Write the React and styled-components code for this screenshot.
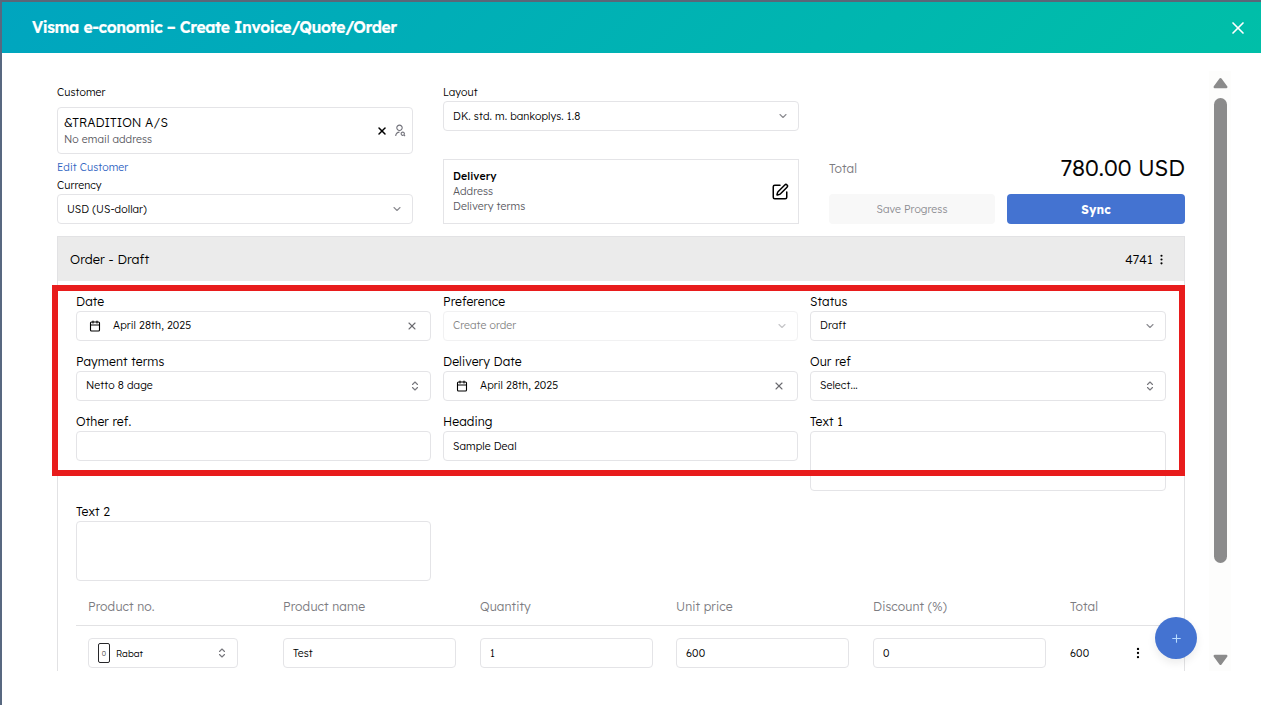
import React from 'react';
import styled, { createGlobalStyle } from 'styled-components';
import {
    Calendar,
    ChevronDown,
    ChevronsUpDown,
    EllipsisVertical,
    Plus,
    SquarePen,
    X,
} from 'lucide-react';
import { RiUserSearchLine } from 'react-icons/ri';

const GlobalStyle = createGlobalStyle`
    * {
        box-sizing: border-box;
    }
    html, body {
        margin: 0;
        overflow: hidden;
        background: #fff;
    }
    body, input, textarea, button {
        font-family: Lexend, Inter, sans-serif;
        font-weight: 300;
        letter-spacing: 0.09px;
    }
`;

const Window = styled.div`
    width: 1261px;
    height: 705px;
    border-top: 2px solid #5b6678;
    border-left: 2px solid #586880;
    display: flex;
    flex-direction: column;
    background: #fff;
    color: #000;
    font-size: 10.5px;
    overflow: hidden;
`;

const Header = styled.header`
    flex: none;
    height: 51px;
    padding: 0 13px 0 30px;
    display: flex;
    align-items: center;
    justify-content: space-between;
    background: linear-gradient(135deg, #00a5bf, #00bfa8);
    color: #fff;
`;

const Title = styled.h1`
    margin: 0 0 1px;
    font-size: 15.75px;
    font-weight: 600;
    letter-spacing: -0.4px;
    -webkit-text-stroke: 0.2px #fff;
`;

const Body = styled.div`
    height: 600px;
    margin-top: 18px;
    display: flex;
    overflow: hidden;
`;

const Content = styled.main`
    position: relative;
    width: 1128px;
    margin-left: 55px;
    flex: none;
`;

const TopGrid = styled.section`
    height: 153px;
    padding-top: 14px;
    display: grid;
    grid-template-columns: repeat(3, 356px);
    column-gap: 30px;
`;

const Column = styled.div`
    display: flex;
    flex-direction: column;
    justify-content: ${p => p.$end ? 'flex-end' : 'flex-start'};
`;

const SmallLabel = styled.label`
    height: ${p => p.$height || 16}px;
    line-height: 15px;
`;

const EditLink = styled.a`
    height: 19px;
    margin-top: 5px;
    line-height: 17px;
    color: #2f64c2;
`;

const Control = styled.div`
    width: ${p => p.$width || '100%'};
    height: ${p => p.$height || 30}px;
    padding: ${p => p.$padding || '0 9px 0 9px'};
    display: flex;
    align-items: center;
    justify-content: space-between;
    border: 1px solid #e4e4e7;
    border-radius: 4px;
    background: #fff;
    opacity: ${p => p.$disabled ? 0.5 : 1};

    svg {
        flex: none;
    }
`;

const CustomerName = styled.div`
    padding-top: 1px;
    font-size: 12.25px;
    line-height: 16px;
`;

const Muted = styled.div`
    color: #58585e;
    line-height: ${p => p.$line || 15}px;
`;

const Icons = styled.div`
    display: flex;
    align-items: center;
    gap: 5px;
`;

const DeliveryBox = styled.div`
    height: 65px;
    margin-top: 28px;
    padding: 0 9px 0 9px;
    display: flex;
    align-items: center;
    justify-content: space-between;
    border: 1px solid #e4e4e7;
    line-height: 15px;
`;

const Strong = styled.div`
    font-weight: 500;
`;

const TotalRow = styled.div`
    height: 51px;
    display: flex;
    align-items: center;
    justify-content: space-between;
    color: #7c7c81;
    font-size: 12.2px;
`;

const Amount = styled.strong`
    margin-bottom: 1px;
    color: #000;
    font-size: 22.4px;
    font-weight: 300;
    -webkit-text-stroke: 0.2px #000;
`;

const Buttons = styled.div`
    display: grid;
    grid-template-columns: 166px 178px;
    gap: 12px;
`;

const Button = styled.button`
    height: 30px;
    padding: 0;
    border: 0;
    border-radius: 4px;
    background: ${p => p.$primary ? '#4473d1' : '#f8f8f8'};
    color: ${p => p.$primary ? '#fff' : '#8b8b90'};
    font-size: ${p => p.$primary ? 12 : 10.5}px;
    font-weight: ${p => p.$primary ? 700 : 300};
`;

const Panel = styled.section`
    height: 460px;
    margin-top: 12px;
    border: 1px solid #e2e2e4;
`;

const PanelHead = styled.div`
    height: 44px;
    padding: 0 16px 0 12px;
    display: flex;
    align-items: center;
    justify-content: space-between;
    background: #ebebeb;
    font-size: 12.8px;
`;

const OrderNo = styled.div`
    display: flex;
    align-items: center;
    gap: 2px;
`;

const Fields = styled.div`
    padding: 12px 18px 0;
    display: grid;
    grid-template-columns: 355px 355px 356px;
    column-gap: 12px;
`;

const FieldBox = styled.div`
    height: ${p => p.$tall ? 90 : 60}px;
`;

const FieldLabel = styled.label`
    display: block;
    height: 18px;
    line-height: 17px;
    font-size: 12.2px;
`;

const Value = styled.div`
    padding-bottom: ${p => p.$raised ? 2 : 0}px;
`;

const DateValue = styled.div`
    display: flex;
    align-items: center;
    gap: 12px;
`;

const Table = styled.div`
    margin: -4px 18px 0;
`;

const TableRow = styled.div`
    height: ${p => p.$head ? 37 : 54}px;
    display: grid;
    grid-template-columns: 195px 197px 196px 197px 197px 87px;
    align-items: center;
    border-bottom: ${p => p.$head ? '1px solid #e2e2e4' : '0'};
    color: ${p => p.$head ? '#7c7c81' : 'inherit'};
    font-size: ${p => p.$head ? 12.2 : 10.5}px;
`;

const Cell = styled.div`
    padding-left: 12px;
    display: flex;
    align-items: center;
    justify-content: space-between;
`;

const HeadText = styled.span`
    padding-bottom: 1px;
`;

const Product = styled.div`
    display: flex;
    align-items: center;
    gap: 6px;
    font-size: 9.3px;
`;

const Thumb = styled.span`
    width: 12px;
    height: 20px;
    display: flex;
    align-items: center;
    justify-content: center;
    border: 1px solid #27272a;
    border-radius: 2px;
    color: #3f3f46;
    font-size: 7px;
`;

const AddButton = styled.button`
    position: absolute;
    left: 1098px;
    top: 546px;
    width: 42px;
    height: 42px;
    padding: 0;
    display: flex;
    align-items: center;
    justify-content: center;
    border: 0;
    border-radius: 50%;
    background: #4473d1;
    color: #b9dcff;
    box-shadow: 0 4px 8px rgba(0, 0, 0, 0.08);
`;

// Highlight frame drawn over the editable fields
const Highlight = styled.div`
    position: absolute;
    left: -5px;
    top: 214px;
    width: 1133px;
    height: 191px;
    border: 6px solid #e81c1c;
    pointer-events: none;
`;

const Scrollbar = styled.div`
    width: 22px;
    margin-left: 24px;
    padding: 6px 0 5px 1px;
    display: flex;
    flex-direction: column;
    align-items: center;
    background: #fdfdfc;
`;

const Thumbbar = styled.div`
    width: 13px;
    height: 465px;
    margin: 9px 0 auto;
    border-radius: 7px;
    background: #8b8b8b;
`;

const Arrow = ({ down }) => (
    <svg width="15" height="12" viewBox="0 0 15 12">
        <path
            d={down ? 'M1.8 2h11.4L7.5 9.8z' : 'M1.8 10h11.4L7.5 2.2z'}
            fill="#8b8b8b"
            stroke="#8b8b8b"
            strokeWidth="2.5"
            strokeLinejoin="round"
        />
    </svg>
);

const Chevron = () => <ChevronDown size={12} color="#8b8b90" strokeWidth={2.2} />;
const UpDown = () => <ChevronsUpDown size={12} color="#77777d" strokeWidth={2.2} />;

const Field = ({ label, value, type, disabled }) => (
    <FieldBox $tall={type === 'area'}>
        <FieldLabel>{label}</FieldLabel>
        <Control
            $height={type === 'area' ? 60 : 30}
            $disabled={disabled}
            $padding={type === 'date' ? '0 12px' : undefined}
        >
            {type === 'date' ? (
                <DateValue>
                    <Calendar size={12} strokeWidth={2.2} />
                    <Value $raised>{value}</Value>
                </DateValue>
            ) : (
                <Value $raised={!!type}>{value}</Value>
            )}
            {type === 'date' && <X size={12} color="#6b6b70" strokeWidth={2.2} />}
            {type === 'select' && <Chevron />}
            {type === 'combo' && <UpDown />}
        </Control>
    </FieldBox>
);

const fields = [
    { label: 'Date', value: 'April 28th, 2025', type: 'date' },
    { label: 'Preference', value: 'Create order', type: 'select', disabled: true },
    { label: 'Status', value: 'Draft', type: 'select' },
    { label: 'Payment terms', value: 'Netto 8 dage', type: 'combo' },
    { label: 'Delivery Date', value: 'April 28th, 2025', type: 'date' },
    { label: 'Our ref', value: 'Select...', type: 'combo' },
    { label: 'Other ref.' },
    { label: 'Heading', value: 'Sample Deal' },
    { label: 'Text 1', type: 'area' },
    { label: 'Text 2', type: 'area' },
];

const headings = ['Product no.', 'Product name', 'Quantity', 'Unit price', 'Discount (%)', 'Total'];

const App = () => {
    return (
        <>
            <GlobalStyle />
            <Window>
                <Header>
                    <Title>Visma e-conomic – Create Invoice/Quote/Order</Title>
                    <X size={20} strokeWidth={2} />
                </Header>
                <Body>
                    <Content>
                        <TopGrid>
                            <Column>
                                <SmallLabel $height={22}>Customer</SmallLabel>
                                <Control $height={47} $padding="0 6px">
                                    <div>
                                        <CustomerName>&amp;TRADITION A/S</CustomerName>
                                        <Muted $line={16}>No email address</Muted>
                                    </div>
                                    <Icons>
                                        <X size={12} strokeWidth={3} />
                                        <RiUserSearchLine size={13} color="#71717a" />
                                    </Icons>
                                </Control>
                                <EditLink>Edit Customer</EditLink>
                                <SmallLabel>Currency</SmallLabel>
                                <Control>
                                    USD (US-dollar)
                                    <Chevron />
                                </Control>
                            </Column>
                            <Column>
                                <SmallLabel>Layout</SmallLabel>
                                <Control>
                                    DK. std. m. bankoplys. 1.8
                                    <Chevron />
                                </Control>
                                <DeliveryBox>
                                    <div>
                                        <Strong>Delivery</Strong>
                                        <Muted>Address</Muted>
                                        <Muted>Delivery terms</Muted>
                                    </div>
                                    <SquarePen size={18} />
                                </DeliveryBox>
                            </Column>
                            <Column $end>
                                <TotalRow>
                                    Total
                                    <Amount>780.00 USD</Amount>
                                </TotalRow>
                                <Buttons>
                                    <Button>Save Progress</Button>
                                    <Button $primary>Sync</Button>
                                </Buttons>
                            </Column>
                        </TopGrid>
                        <Panel>
                            <PanelHead>
                                Order - Draft
                                <OrderNo>
                                    4741
                                    <EllipsisVertical size={13} />
                                </OrderNo>
                            </PanelHead>
                            <Fields>
                                {fields.map(item => (
                                    <Field key={item.label} {...item} />
                                ))}
                            </Fields>
                            <Table>
                                <TableRow $head>
                                    {headings.map(name => (
                                        <Cell key={name}>
                                            <HeadText>{name}</HeadText>
                                        </Cell>
                                    ))}
                                </TableRow>
                                <TableRow>
                                    <Cell>
                                        <Control $width="150px">
                                            <Product>
                                                <Thumb>0</Thumb>
                                                Rabat
                                            </Product>
                                            <UpDown />
                                        </Control>
                                    </Cell>
                                    {['Test', '1', '600', '0'].map((value, i) => (
                                        <Cell key={i}>
                                            <Control $width="173px">{value}</Control>
                                        </Cell>
                                    ))}
                                    <Cell>
                                        600
                                        <EllipsisVertical size={14} />
                                    </Cell>
                                </TableRow>
                            </Table>
                        </Panel>
                        <Highlight />
                        <AddButton>
                            <Plus size={13} />
                        </AddButton>
                    </Content>
                    <Scrollbar>
                        <Arrow />
                        <Thumbbar />
                        <Arrow down />
                    </Scrollbar>
                </Body>
            </Window>
        </>
    );
};

export default App;
